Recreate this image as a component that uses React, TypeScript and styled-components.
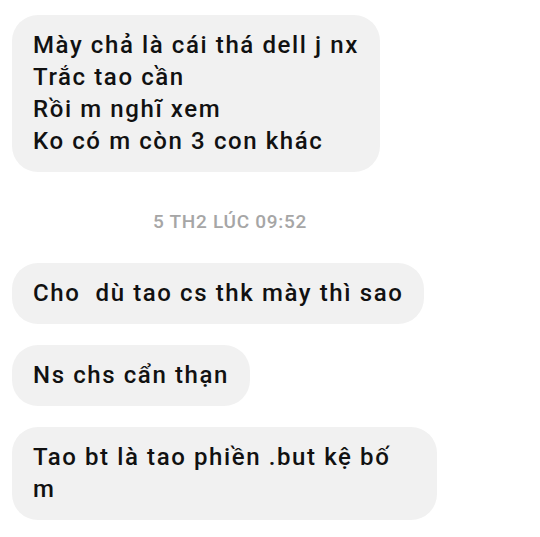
import styled, { createGlobalStyle } from 'styled-components';

const GlobalStyle = createGlobalStyle`
  body {
    margin: 0;
    background: #ffffff;
    font-family: Roboto, 'Liberation Sans', sans-serif;
  }
`;

const Thread = styled.main`
  display: flex;
  flex-direction: column;
  align-items: flex-start;
  width: 436px;
  padding: 15px 0 0 12px;
`;

const Bubble = styled.div<{ $gap?: number }>`
  box-sizing: border-box;
  max-width: 425px;
  margin-top: ${(props) => props.$gap ?? 0}px;
  padding: 14px 21px 15px 21px;
  border-radius: 26px;
  background: #f1f1f1;
  color: #111111;
  font-size: 24px;
  font-weight: 500;
  letter-spacing: 1.6px;
  line-height: 32px;
  white-space: pre-wrap;
`;

const Stamp = styled.div`
  align-self: center;
  margin: 38px 0 29px 0;
  color: #a6a6a6;
  font-size: 19px;
  font-weight: 500;
  letter-spacing: 0.7px;
  line-height: 24px;
`;

const firstBlock = [
  'Mày chả là cái thá dell j nx',
  'Trắc tao cần',
  'Rồi m nghĩ xem',
  'Ko có m còn 3 con khác',
];

const laterMessages = [
  'Cho  dù tao cs thk mày thì sao',
  'Ns chs cẩn thạn',
  'Tao bt là tao phiền .but kệ bố m',
];

const App = () => {
  return (
    <>
      <GlobalStyle />
      <Thread>
        <Bubble>{firstBlock.join('\n')}</Bubble>
        <Stamp>5 TH2 LÚC 09:52</Stamp>
        {laterMessages.map((text, i) => (
          <Bubble key={text} $gap={i === 0 ? 0 : 21}>
            {text}
          </Bubble>
        ))}
      </Thread>
    </>
  );
};

export default App;
